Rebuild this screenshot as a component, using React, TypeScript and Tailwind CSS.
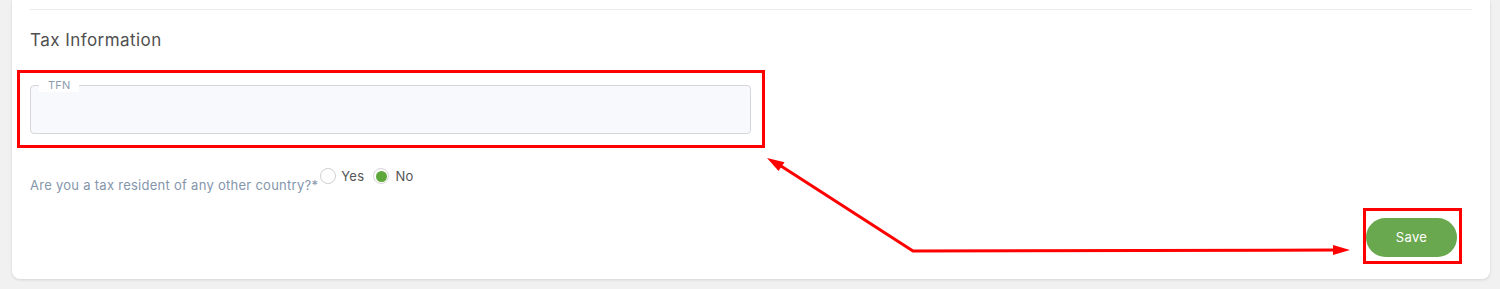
import React from "react";

export default function App() {
  return (
    <div
      className="relative w-[1500px] h-[289px] overflow-hidden bg-[#f1f1f1]"
      style={{ fontFamily: "Inter, 'Noto Sans', sans-serif" }}
    >
      <div className="ml-[12px] w-[1478px] h-[279px] bg-white rounded-b-[8px] shadow-[0_1px_3px_rgba(0,0,0,0.12)] pt-[9px] pl-[18px] pr-[18px] flex flex-col">
        <div className="h-px bg-[#ebebeb] w-[1442px]" />
        <h2 className="mt-[18px] h-[24px] leading-[24px] text-[17px] tracking-[0.45px] text-[#4f4f4f] font-normal">
          Tax Information
        </h2>
        <div className="relative mt-[33px] w-[721px] h-[49px] rounded-[4px] border border-[#d4d6da] bg-[#f8f9fd]">
          <span className="absolute left-[8px] top-[-8px] px-[9px] bg-white text-[11px] tracking-[0.2px] leading-[14px] text-[#8c9bb0]">
            TFN
          </span>
        </div>
        <div className="mt-[34px] flex items-start">
          <span className="mt-[7px] text-[13px] tracking-[0.27px] leading-[20px] text-[#8496ac]">
            Are you a tax resident of any other country?*
          </span>
          <label className="flex items-center ml-[2px]">
            <span className="w-[16px] h-[16px] rounded-full border border-[#d0d0d0] bg-white" />
            <span className="ml-[5px] text-[13px] tracking-[0.3px] leading-[16px] text-[#555]">Yes</span>
          </label>
          <label className="flex items-center ml-[9px]">
            <span className="w-[16px] h-[16px] rounded-full border border-[#d6d6d6] bg-white flex items-center justify-center">
              <span className="w-[11px] h-[11px] rounded-full bg-[#5ea83b]" />
            </span>
            <span className="ml-[6px] text-[13px] tracking-[0.3px] leading-[16px] text-[#555]">No</span>
          </label>
        </div>
        <div className="flex justify-end mt-[23px] pr-[15px]">
          <button className="w-[91px] h-[39px] rounded-full bg-[#6aa84f] text-white text-[13px] tracking-[0.3px]">
            Save
          </button>
        </div>
      </div>

      <div className="absolute left-[17px] top-[70px] w-[748px] h-[78px] border-[3px] border-[#ff0000]" />
      <div className="absolute left-[1363px] top-[208px] w-[99px] h-[56px] border-[3px] border-[#ff0000]" />
      <svg className="absolute left-0 top-0" width="1500" height="289">
        <polyline
          points="1336,250 913,251 781,166"
          fill="none"
          stroke="#ff0000"
          strokeWidth="3"
        />
        <polygon points="1350,250 1333,245 1333,255" fill="#ff0000" />
        <polygon points="767,158 784.5,162.3 778.5,171" fill="#ff0000" />
      </svg>
    </div>
  );
}
